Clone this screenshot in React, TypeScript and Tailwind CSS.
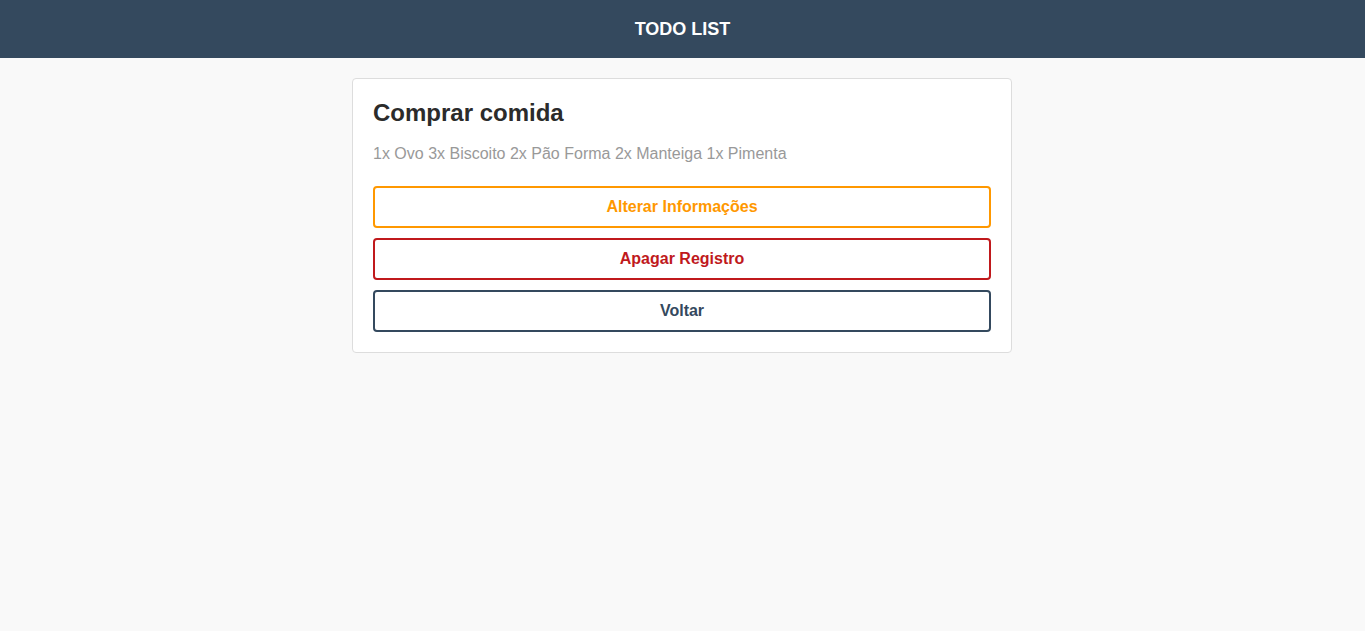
export default function App() {
  return (
    <div className="min-h-screen bg-[#f9f9f9] font-['Liberation_Sans',Arial,sans-serif]">
      <header className="h-[58px] bg-[#34495e] flex items-center justify-center">
        <h1 className="text-white text-[18px] font-bold">TODO LIST</h1>
      </header>
      <main className="flex justify-center pt-5 pr-px">
        <div className="w-[660px] bg-white border border-[#dddddd] rounded p-5">
          <h2 className="text-[24px] font-bold text-[#2b2b2b] leading-[29px] mt-[-1px]">Comprar comida</h2>
          <p className="text-[16px] text-[#999999] mt-[17px] leading-[20px]">
            1x Ovo 3x Biscoito 2x Pão Forma 2x Manteiga 1x Pimenta
          </p>
          <div className="flex flex-col gap-[10px] mt-[22px]">
            <button className="h-[42px] w-full border-2 border-[#ff9800] rounded text-[#ff9800] font-bold text-[16px] bg-white">
              Alterar Informações
            </button>
            <button className="h-[42px] w-full border-2 border-[#c0191c] rounded text-[#c0191c] font-bold text-[16px] bg-white">
              Apagar Registro
            </button>
            <button className="h-[42px] w-full border-2 border-[#34495e] rounded text-[#34495e] font-bold text-[16px] bg-white">
              Voltar
            </button>
          </div>
        </div>
      </main>
    </div>
  );
}
